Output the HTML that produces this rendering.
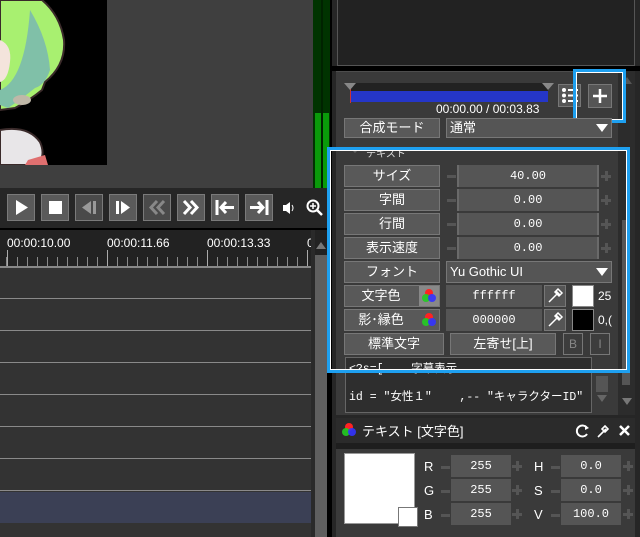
<!DOCTYPE html><html><head><meta charset="utf-8"><style>
*{margin:0;padding:0;box-sizing:border-box}
body{width:640px;height:537px;overflow:hidden;background:#000;position:relative;font-family:"Liberation Sans","Noto Sans CJK JP",sans-serif;color:#eee}
.a{position:absolute}
.btn{position:absolute;background:#595959;border:1px solid #777;color:#fff;font-size:13px;text-align:center;line-height:20px}
.val{position:absolute;background:#555;border-left:2px solid #6a6a6a;border-right:2px solid #6a6a6a;color:#fff;font-family:"Liberation Mono","Noto Sans CJK JP",monospace;font-size:12px;text-align:center;line-height:22px}
.mn{position:absolute;width:9px;height:3px;background:#555}
.pl{position:absolute;width:10px;height:10px}
.pl:before{content:"";position:absolute;left:0;top:4px;width:10px;height:3px;background:#555}
.pl:after{content:"";position:absolute;left:4px;top:0;width:3px;height:10px;background:#555}
.cb{position:absolute;width:28px;height:27px;background:#5a5a5a;border:1px solid #7a7a7a}
.tk{position:absolute;font-size:12px;color:#fff;top:236px}
</style></head><body>
<div class="a" style="left:0;top:0;width:313px;height:188px;background:#3f3f3f"></div>
<div class="a" style="left:0;top:0;width:107px;height:165px;background:#000;overflow:hidden">
<svg width="107" height="165"><path d="M0 0 H42 Q60 15 64 40 Q66 65 45 82 L42 90 Q30 100 15 108 L0 110Z" fill="#a8f070" stroke="#3a2a2a" stroke-width="2"/><path d="M30 10 Q48 40 50 70 Q45 85 35 88 Q20 100 8 108 L0 105 V90 Q25 80 30 10Z" fill="#80c0a8"/><ellipse cx="22" cy="100" rx="9" ry="5" fill="#bfb8a8"/><path d="M0 40 Q12 45 10 62 Q8 80 0 82Z" fill="#f4e4dc"/><path d="M0 130 Q28 125 40 142 Q47 158 35 165 H0Z" fill="#e8e6e8" stroke="#3a2a2a" stroke-width="2"/><path d="M28 160 L45 155 L48 165 H25Z" fill="#e07070"/></svg></div>
<div class="a" style="left:313px;top:0;width:17px;height:188px;background:#003300"></div>
<div class="a" style="left:315px;top:113px;width:6px;height:75px;background:#0a9a0a"></div>
<div class="a" style="left:323px;top:113px;width:6px;height:75px;background:#0a9a0a"></div>
<div class="a" style="left:321px;top:0;width:2px;height:188px;background:#002200"></div>
<div class="a" style="left:0;top:188px;width:330px;height:41px;background:#262626"></div>
<div class="cb" style="left:7px;top:194px"><svg width="26" height="25"><path d="M8 5 L20 12.5 L8 20Z" fill="#fff"/></svg></div>
<div class="cb" style="left:41px;top:194px"><svg width="26" height="25"><rect x="7" y="6" width="13" height="13" fill="#fff"/></svg></div>
<div class="cb" style="left:75px;top:194px;background:#4a4a4a"><svg width="26" height="25"><path d="M15 6 L6 12.5 L15 19Z M17 6h3v13h-3z" fill="#999"/></svg></div>
<div class="cb" style="left:109px;top:194px"><svg width="26" height="25"><path d="M6 6h3v13h-3z M11 6 L20 12.5 L11 19Z" fill="#fff"/></svg></div>
<div class="cb" style="left:143px;top:194px;background:#4a4a4a"><svg width="26" height="25"><path d="M13 6 L7 12.5 L13 19 M20 6 L14 12.5 L20 19" stroke="#888" stroke-width="3" fill="none"/></svg></div>
<div class="cb" style="left:177px;top:194px"><svg width="26" height="25"><path d="M6 6 L12 12.5 L6 19 M13 6 L19 12.5 L13 19" stroke="#fff" stroke-width="3" fill="none"/></svg></div>
<div class="cb" style="left:211px;top:194px"><svg width="26" height="25"><path d="M5 5v15" stroke="#fff" stroke-width="3"/><path d="M9 12.5h13 M14 7 L9 12.5 L14 18" stroke="#fff" stroke-width="3" fill="none"/></svg></div>
<div class="cb" style="left:245px;top:194px"><svg width="26" height="25"><path d="M21 5v15" stroke="#fff" stroke-width="3"/><path d="M4 12.5h13 M12 7 L17 12.5 L12 18" stroke="#fff" stroke-width="3" fill="none"/></svg></div>
<svg class="a" style="left:282px;top:201px" width="14" height="14"><path d="M1 4h3l4-3v12l-4-3h-3z" fill="#fff"/><path d="M10 4q2 3 0 6" stroke="#fff" fill="none"/></svg>
<svg class="a" style="left:306px;top:199px" width="18" height="18"><circle cx="7" cy="7" r="5.5" stroke="#fff" stroke-width="2" fill="none"/><path d="M4 7h6M7 4v6" stroke="#fff" stroke-width="1.5"/><path d="M11 11l5 5" stroke="#fff" stroke-width="2.5"/></svg>
<div class="a" style="left:0;top:228px;width:330px;height:2px;background:#000"></div>
<div class="a" style="left:0;top:230px;width:330px;height:38px;background:#222"></div>
<div class="a" style="left:0;top:257px;width:311px;height:10px;background-image:repeating-linear-gradient(90deg,#888 0 1px,transparent 1px 10px);background-position:7px 0"></div>
<div class="a" style="left:7px;top:250px;width:1px;height:17px;background:#aaa"></div>
<div class="a" style="left:107px;top:250px;width:1px;height:17px;background:#aaa"></div>
<div class="a" style="left:207px;top:250px;width:1px;height:17px;background:#aaa"></div>
<div class="a" style="left:307px;top:250px;width:1px;height:17px;background:#aaa"></div>
<div class="tk" style="left:7px">00:00:10.00</div>
<div class="tk" style="left:107px">00:00:11.66</div>
<div class="tk" style="left:207px">00:00:13.33</div>
<div class="tk" style="left:307px">0</div>
<div class="a" style="left:0;top:266px;width:311px;height:2px;background:#888"></div>
<div class="a" style="left:0;top:268px;width:311px;height:269px;background:#333;background-image:repeating-linear-gradient(180deg,transparent 0 31px,#8a8a8a 31px 32px);background-position:0 -1px"></div>
<div class="a" style="left:0;top:492px;width:311px;height:31px;background:#3b4055"></div>
<div class="a" style="left:311px;top:230px;width:4px;height:307px;background:#2a2a2a"></div>
<div class="a" style="left:315px;top:255px;width:12px;height:282px;background:#5f5f5f"></div>
<svg class="a" style="left:315px;top:240px" width="12" height="10"><path d="M1 9L6 2L11 9Z" fill="#777"/></svg>
<div class="a" style="left:332px;top:0;width:308px;height:537px;background:#262626"></div>
<div class="a" style="left:337px;top:0;width:298px;height:66px;background:#222;border:1px solid #555;border-top:none"></div>
<div class="a" style="left:332px;top:66px;width:308px;height:5px;background:#000"></div>
<div class="a" style="left:336px;top:71px;width:282px;height:344px;background:#3a3a3a;border-top:1px solid #4d4d4d"></div>
<div class="a" style="left:618px;top:71px;width:17px;height:344px;background:#2c2c2c"></div>
<div class="a" style="left:622px;top:220px;width:8px;height:165px;background:#555"></div>
<svg class="a" style="left:621px;top:75px" width="12" height="10"><path d="M1 9L6 2L11 9Z" fill="#555"/></svg>
<svg class="a" style="left:621px;top:397px" width="12" height="10"><path d="M1 1L6 8L11 1Z" fill="#777"/></svg>
<div class="a" style="left:350px;top:83px;width:198px;height:8px;background:#222"></div>
<div class="a" style="left:350px;top:91px;width:198px;height:11px;background:#2536c8"></div>
<div class="a" style="left:350px;top:83px;width:1px;height:20px;background:#c33"></div>
<svg class="a" style="left:344px;top:83px" width="210" height="8"><path d="M0 0h12l-6 7z M198 0h12l-6 7z" fill="#888"/></svg>
<div class="a" style="left:436px;top:102px;font-size:12px;color:#fff">00:00.00 / 00:03.83</div>
<div class="a" style="left:558px;top:84px;width:23px;height:23px;background:#555;border:1px solid #777"><svg width="21" height="21"><g fill="#fff"><circle cx="5" cy="5" r="2"/><circle cx="5" cy="10.5" r="2"/><circle cx="5" cy="16" r="2"/><rect x="9" y="4" width="10" height="2"/><rect x="9" y="9.5" width="10" height="2"/><rect x="9" y="15" width="10" height="2"/></g></svg></div>
<div class="a" style="left:588px;top:84px;width:24px;height:24px;background:#555;border:1px solid #777"><svg width="22" height="22"><path d="M11 4v14M4 11h14" stroke="#fff" stroke-width="2.5"/></svg></div>
<div class="a" style="left:573px;top:69px;width:53px;height:54px;border:3px solid #1ea0f0;box-shadow:inset 0 0 0 1px #fff"></div>
<div class="btn" style="left:344px;top:118px;width:96px;height:20px;line-height:18px">合成モード</div>
<div class="a" style="left:446px;top:118px;width:166px;height:20px;background:#555;border:1px solid #777;font-size:13px;line-height:18px;padding-left:3px;color:#fff">通常<svg style="position:absolute;right:3px;top:5px" width="12" height="9"><path d="M0 0h12L6 8z" fill="#fff"/></svg></div>
<div class="a" style="left:366px;top:145px;font-size:10px;color:#ddd">テキスト</div>
<svg class="a" style="left:350px;top:148px" width="10" height="6"><path d="M0 0h10L5 5z" fill="#666"/></svg>
<div class="btn" style="left:344px;top:165px;width:96px;height:22px">サイズ</div>
<div class="mn" style="left:447px;top:175px"></div><div class="val" style="left:457px;top:165px;width:142px;height:22px">40.00</div><div class="pl" style="left:601px;top:171px"></div>
<div class="btn" style="left:344px;top:189px;width:96px;height:22px">字間</div>
<div class="mn" style="left:447px;top:199px"></div><div class="val" style="left:457px;top:189px;width:142px;height:22px">0.00</div><div class="pl" style="left:601px;top:195px"></div>
<div class="btn" style="left:344px;top:213px;width:96px;height:22px">行間</div>
<div class="mn" style="left:447px;top:223px"></div><div class="val" style="left:457px;top:213px;width:142px;height:22px">0.00</div><div class="pl" style="left:601px;top:219px"></div>
<div class="btn" style="left:344px;top:237px;width:96px;height:22px">表示速度</div>
<div class="mn" style="left:447px;top:247px"></div><div class="val" style="left:457px;top:237px;width:142px;height:22px">0.00</div><div class="pl" style="left:601px;top:243px"></div>
<div class="btn" style="left:344px;top:261px;width:96px;height:22px">フォント</div>
<div class="a" style="left:446px;top:261px;width:166px;height:22px;background:#555;border:1px solid #777;font-size:13px;line-height:20px;padding-left:3px;color:#fff">Yu Gothic UI<svg style="position:absolute;right:3px;top:6px" width="12" height="9"><path d="M0 0h12L6 8z" fill="#fff"/></svg></div>
<div class="btn" style="left:344px;top:285px;width:96px;height:22px;padding-right:22px">文字色<svg style="position:absolute;right:0;top:0" width="20" height="20"><rect width="20" height="20" fill="#888"/><circle cx="10" cy="7" r="4" fill="#f22"/><circle cx="7" cy="12" r="4" fill="#2c2" opacity=".9"/><circle cx="13" cy="12" r="4" fill="#33f" opacity=".9"/></svg></div>
<div class="val" style="left:446px;top:285px;width:96px;height:22px;border:none">ffffff</div>
<div class="a" style="left:544px;top:285px;width:22px;height:22px;background:#555;border:1px solid #777"><svg width="20" height="20"><path d="M4 16 L12 8 M11 5 L15 9 M13 3 l4 4 -3 3 -4 -4z" stroke="#fff" stroke-width="1.5" fill="none"/></svg></div>
<div class="a" style="left:572px;top:285px;width:22px;height:22px;background:#fff;border:1px solid #888"></div>
<div class="a" style="left:598px;top:289px;font-size:12px;color:#fff">25</div>
<div class="btn" style="left:344px;top:309px;width:96px;height:22px;padding-right:22px">影･縁色<svg style="position:absolute;right:0;top:0" width="20" height="20"><circle cx="10" cy="7" r="4" fill="#f22"/><circle cx="7" cy="12" r="4" fill="#2c2" opacity=".9"/><circle cx="13" cy="12" r="4" fill="#33f" opacity=".9"/></svg></div>
<div class="val" style="left:446px;top:309px;width:96px;height:22px;border:none">000000</div>
<div class="a" style="left:544px;top:309px;width:22px;height:22px;background:#555;border:1px solid #777"><svg width="20" height="20"><path d="M4 16 L12 8 M11 5 L15 9 M13 3 l4 4 -3 3 -4 -4z" stroke="#fff" stroke-width="1.5" fill="none"/></svg></div>
<div class="a" style="left:572px;top:309px;width:22px;height:22px;background:#000;border:1px solid #888"></div>
<div class="a" style="left:598px;top:313px;font-size:12px;color:#fff">0,(</div>
<div class="btn" style="left:344px;top:333px;width:100px;height:22px">標準文字</div>
<div class="btn" style="left:450px;top:333px;width:106px;height:22px">左寄せ[上]</div>
<div class="btn" style="left:563px;top:333px;width:20px;height:22px;background:#3d3d3d;color:#888;font-size:12px">B</div>
<div class="btn" style="left:590px;top:333px;width:20px;height:22px;background:#3d3d3d;color:#888;font-size:12px">I</div>
<div class="a" style="left:345px;top:357px;width:247px;height:56px;background:#2e2e2e;border:1px solid #666;overflow:hidden;font-family:'Liberation Mono','Noto Sans CJK JP',monospace;font-size:11.5px;color:#fff;white-space:pre;padding-left:3px;line-height:14px;padding-top:5px">&lt;?s=[    字幕表示

id = "女性１"    ,-- "キャラクターID" (</div>
<div class="a" style="left:596px;top:376px;width:12px;height:16px;background:#555"></div>
<svg class="a" style="left:596px;top:394px" width="12" height="10"><path d="M1 1L6 8L11 1Z" fill="#666"/></svg>
<div class="a" style="left:327px;top:147px;width:303px;height:226px;border:3px solid #1ea0f0;box-shadow:inset 0 0 0 1px #fff"></div>
<div class="a" style="left:336px;top:418px;width:299px;height:25px;background:#2b2b2b"></div>
<svg class="a" style="left:341px;top:422px" width="16" height="16"><circle cx="8" cy="5" r="4" fill="#f22"/><circle cx="5" cy="10" r="4" fill="#2c2" opacity=".9"/><circle cx="11" cy="10" r="4" fill="#33f" opacity=".9"/></svg>
<div class="a" style="left:362px;top:421px;font-size:13px;color:#fff">テキスト [文字色]</div>
<svg class="a" style="left:574px;top:423px" width="60" height="16"><path d="M13 5 A5.5 5.5 0 1 0 13 11" stroke="#fff" stroke-width="2" fill="none"/><path d="M11 2l4 3-4 2z" fill="#fff"/><path d="M24 14 L32 6 M31 3 l3 3 -3 3 -3 -3z" stroke="#fff" stroke-width="1.6" fill="none"/><path d="M46 3l9 9M55 3l-9 9" stroke="#fff" stroke-width="2.5"/></svg>
<div class="a" style="left:336px;top:443px;width:299px;height:6px;background:#1e1e1e"></div>
<div class="a" style="left:336px;top:449px;width:299px;height:88px;background:#3a3a3a"></div>
<div class="a" style="left:344px;top:453px;width:71px;height:71px;background:#fff;border:1px solid #999"></div>
<div class="a" style="left:398px;top:507px;width:20px;height:20px;background:#fff;border:1px solid #777"></div>
<div class="a" style="left:424px;top:459px;font-size:13px;color:#fff">R</div>
<div class="a" style="left:424px;top:483px;font-size:13px;color:#fff">G</div>
<div class="a" style="left:424px;top:507px;font-size:13px;color:#fff">B</div>
<div class="a" style="left:534px;top:459px;font-size:13px;color:#fff">H</div>
<div class="a" style="left:534px;top:483px;font-size:13px;color:#fff">S</div>
<div class="a" style="left:534px;top:507px;font-size:13px;color:#fff">V</div>
<div class="mn" style="left:441px;top:466px"></div><div class="val" style="left:451px;top:455px;width:60px;height:22px;border:none">255</div><div class="pl" style="left:512px;top:461px"></div>
<div class="mn" style="left:441px;top:490px"></div><div class="val" style="left:451px;top:479px;width:60px;height:22px;border:none">255</div><div class="pl" style="left:512px;top:485px"></div>
<div class="mn" style="left:441px;top:514px"></div><div class="val" style="left:451px;top:503px;width:60px;height:22px;border:none">255</div><div class="pl" style="left:512px;top:509px"></div>
<div class="mn" style="left:551px;top:466px"></div><div class="val" style="left:561px;top:455px;width:60px;height:22px;border:none">0.0</div><div class="pl" style="left:623px;top:461px"></div>
<div class="mn" style="left:551px;top:490px"></div><div class="val" style="left:561px;top:479px;width:60px;height:22px;border:none">0.0</div><div class="pl" style="left:623px;top:485px"></div>
<div class="mn" style="left:551px;top:514px"></div><div class="val" style="left:561px;top:503px;width:60px;height:22px;border:none">100.0</div><div class="pl" style="left:623px;top:509px"></div>
</body></html>
